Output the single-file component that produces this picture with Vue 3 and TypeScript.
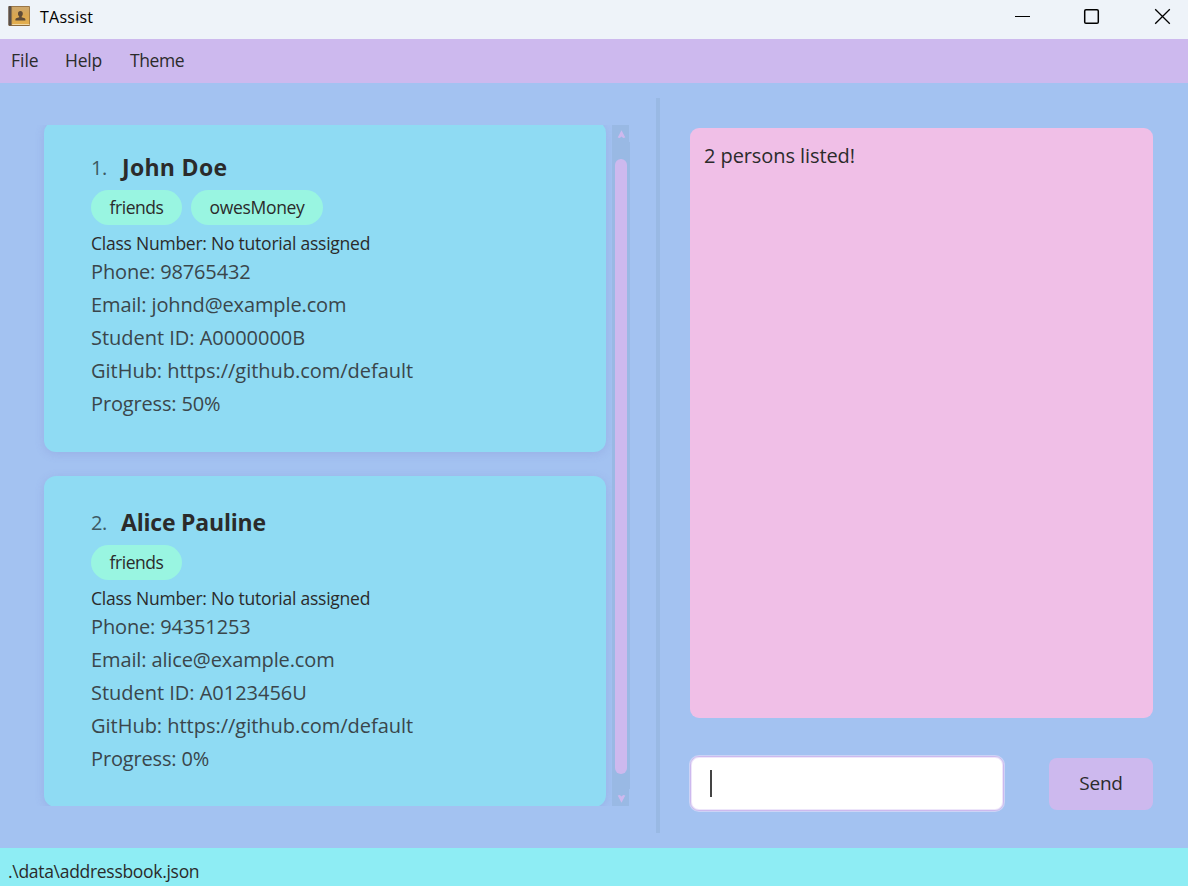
<script setup lang="ts">
interface Detail {
  text: string
  kind: string
}

interface Person {
  index: number
  name: string
  nameClass: string
  tags: { label: string; kind: string }[]
  details: Detail[]
}

const menus = [
  { label: 'File', kind: 'file' },
  { label: 'Help', kind: 'help' },
  { label: 'Theme', kind: 'theme' },
]

const persons: Person[] = [
  {
    index: 1,
    name: 'John Doe',
    nameClass: 'john',
    tags: [
      { label: 'friends', kind: 'short' },
      { label: 'owesMoney', kind: 'long' },
    ],
    details: [
      { text: 'Phone: 98765432', kind: 'phone' },
      { text: 'Email: johnd@example.com', kind: 'email' },
      { text: 'Student ID: A0000000B', kind: 'student' },
      { text: 'GitHub: https://github.com/default', kind: 'github' },
      { text: 'Progress: 50%', kind: 'progress' },
    ],
  },
  {
    index: 2,
    name: 'Alice Pauline',
    nameClass: 'alice',
    tags: [{ label: 'friends', kind: 'short' }],
    details: [
      { text: 'Phone: 94351253', kind: 'phone' },
      { text: 'Email: alice@example.com', kind: 'email' },
      { text: 'Student ID: A0123456U', kind: 'student' },
      { text: 'GitHub: https://github.com/default', kind: 'github' },
      { text: 'Progress: 0%', kind: 'progress' },
    ],
  },
]
</script>

<template>
  <div class="window">
    <header class="titlebar">
      <svg class="app-icon" width="24" height="24" viewBox="0 0 24 24">
        <defs>
          <linearGradient id="cover" x1="0" y1="0" x2="0" y2="1">
            <stop offset="0" stop-color="#cda76c" />
            <stop offset="0.5" stop-color="#d9a650" />
            <stop offset="1" stop-color="#e3ae4d" />
          </linearGradient>
        </defs>
        <rect x="0.5" y="2" width="21.5" height="20" rx="1" fill="#8d6a3c" />
        <rect x="4" y="2.8" width="17.3" height="17.2" fill="url(#cover)" />
        <rect x="4" y="20" width="17.5" height="1" fill="#f0d9a6" />
        <rect x="0.5" y="2" width="3" height="19.5" rx="0.8" fill="#594f4a" />
        <rect x="3.3" y="2.5" width="0.8" height="18.5" fill="#9b7c4d" />
        <ellipse cx="12.4" cy="9.7" rx="2.4" ry="2.8" fill="#5d4a37" />
        <path d="M11.2 11h2.4v2.3l3.1 1q.7.3.7 1.1v1.2H7.4v-1.2q0-.8.7-1.1l3.1-1z" fill="#5d4a37" />
      </svg>
      <span class="app-title">TAssist</span>
      <svg class="controls" width="160" height="24" viewBox="0 0 160 24" fill="none" stroke="#000">
        <path d="M7 12.5H22" />
        <rect x="76.7" y="5.7" width="13.6" height="13.6" rx="1.3" stroke-width="1.5" />
        <path d="M147.2 5.2l14.6 14.6M161.8 5.2l-14.6 14.6" stroke-width="1.3" />
      </svg>
    </header>

    <nav class="menubar">
      <span v-for="menu in menus" :key="menu.label" :class="['menu', menu.kind]">{{ menu.label }}</span>
    </nav>

    <main class="content">
      <section class="list-pane">
        <div class="list">
          <article v-for="person in persons" :key="person.index" class="card">
            <div class="heading">
              <span class="index">{{ person.index }}.</span>
              <span :class="['name', person.nameClass]">{{ person.name }}</span>
            </div>
            <div class="tags">
              <span v-for="tag in person.tags" :key="tag.label" :class="['tag', tag.kind]">{{ tag.label }}</span>
            </div>
            <div class="class-number"><span>Class Number: No tutorial assigned</span></div>
            <div v-for="detail in person.details" :key="detail.kind" :class="['detail', detail.kind]">
              <span>{{ detail.text }}</span>
            </div>
          </article>
        </div>
        <div class="scrollbar">
          <svg class="arrow" width="9" height="9" viewBox="0 0 9 9">
            <path d="M4.5 0.2L8.3 7.4 6.2 8 4.5 6.6 2.8 8 0.7 7.4z" fill="#cdb9ee" />
          </svg>
          <div class="thumb"></div>
          <svg class="arrow" width="9" height="9" viewBox="0 0 9 9">
            <path d="M4.5 8.8L8.3 1.6 6.2 1 4.5 2.4 2.8 1 0.7 1.6z" fill="#cdb9ee" />
          </svg>
        </div>
      </section>

      <div class="divider"></div>

      <section class="chat-pane">
        <div class="result"><span>2 persons listed!</span></div>
        <div class="command-row">
          <div class="command-box"><span class="caret"></span></div>
          <div class="send"><span>Send</span></div>
        </div>
      </section>
    </main>

    <footer class="statusbar"><span>.\data\addressbook.json</span></footer>
  </div>
</template>

<style>
html,
body {
  margin: 0;
  overflow: hidden;
}
</style>

<style scoped>
.window {
  display: flex;
  flex-direction: column;
  width: 1188px;
  height: 886px;
  overflow: hidden;
  background: #a3c2f1;
  color: #2b2b2b;
  font-family: 'Open Sans', 'Noto Sans', sans-serif;
  white-space: nowrap;
}

.window * {
  box-sizing: border-box;
}

.titlebar {
  display: flex;
  align-items: flex-start;
  height: 39px;
  padding: 4px 20px 0 8px;
  background: #eef3f9;
  color: #000;
}

.app-title {
  margin-left: 8px;
  font-size: 16px;
  line-height: 26px;
  letter-spacing: 0.25px;
}

.controls {
  margin-left: auto;
  overflow: visible;
}

.menubar {
  display: flex;
  height: 44px;
  padding-left: 11px;
  background: #cdb9ee;
  font-size: 17.5px;
  line-height: 43px;
}

.menu.file {
  width: 54px;
}

.menu.help {
  width: 65px;
  letter-spacing: -0.25px;
}

.menu.theme {
  letter-spacing: -0.4px;
}

.content {
  display: flex;
  height: 765px;
}

.list-pane {
  display: flex;
  width: 656px;
  padding: 42px 27px 42px 34px;
}

.list {
  flex: none;
  width: 578px;
  height: 681px;
  padding: 0 6px 0 10px;
  overflow: hidden;
}

.card {
  height: 331px;
  margin-bottom: 24px;
  padding: 28px 47px 0;
  border-radius: 12px;
  background: #8fdbf3;
  box-shadow: 0 2px 10px rgba(110, 110, 190, 0.2);
}

.card:first-child {
  margin-top: -4px;
}

.heading {
  display: flex;
  height: 36px;
  line-height: 36px;
}

.index {
  width: 30px;
  font-size: 20px;
  line-height: 38px;
  letter-spacing: -0.5px;
  color: #3d5a63;
}

.name {
  font-size: 23px;
  font-weight: 700;
}

.name.john {
  margin-left: 1px;
  letter-spacing: 0.3px;
}

.name.alice {
  letter-spacing: -0.2px;
}

.tags {
  display: flex;
  gap: 9px;
  margin-top: 5px;
}

.tag {
  height: 35px;
  border-radius: 18px;
  background: #99f5e1;
  font-size: 17.5px;
  line-height: 35px;
  letter-spacing: -0.3px;
  text-align: center;
}

.tag.short {
  width: 91px;
  letter-spacing: -0.45px;
}

.tag.long {
  width: 132px;
}

.class-number {
  height: 24px;
  margin-top: 6px;
  font-size: 17.5px;
  line-height: 24px;
  letter-spacing: -0.235px;
}

.detail {
  height: 33px;
  font-size: 20px;
  line-height: 33px;
  color: #3a464b;
}

.detail.phone,
.detail.progress {
  letter-spacing: -0.15px;
}

.detail.email {
  letter-spacing: -0.12px;
}

.detail.student,
.detail.github {
  letter-spacing: -0.02px;
}

.scrollbar {
  display: flex;
  flex: none;
  flex-direction: column;
  align-items: center;
  width: 18px;
  height: 681px;
  padding: 5px 0 3px;
  background:
    linear-gradient(#99b9e4, #99b9e4) 0 0 / 17px 100% no-repeat,
    linear-gradient(#99b9e4, #99b9e4) 0 17px / 18px 647px no-repeat;
}

.arrow {
  flex: none;
}

.thumb {
  width: 12px;
  height: 615px;
  margin: 20px 0;
  border-radius: 6px;
  background: #cdb9ee;
}

.divider {
  width: 4px;
  height: 735px;
  margin-top: 15px;
  background: #99b9e4;
}

.chat-pane {
  width: 493px;
  margin-left: 30px;
  padding-top: 45px;
}

.result {
  width: 463px;
  height: 590px;
  padding: 11px 14px;
  border-radius: 9px;
  background: #f0bfe7;
  font-size: 20px;
  line-height: 34px;
  letter-spacing: -0.08px;
}

.command-row {
  display: flex;
  align-items: center;
  justify-content: space-between;
  width: 463px;
  margin-top: 38px;
}

.command-box {
  display: flex;
  align-items: center;
  width: 314px;
  height: 55px;
  padding-left: 19px;
  border: 1px solid #cdb9ee;
  border-radius: 9px;
  background: #fff;
  box-shadow: 0 0 0 1px #ccd3f6, inset 0 0 0 1px #eee6fa;
}

.caret {
  width: 2px;
  height: 27px;
  background: #444;
}

.send {
  width: 104px;
  height: 52px;
  border-radius: 8px;
  background: #cdb9ee;
  font-size: 19px;
  line-height: 50px;
  letter-spacing: -0.2px;
  text-align: center;
}

.statusbar {
  height: 38px;
  padding-left: 8px;
  background: #8eedf4;
  font-size: 17.5px;
  line-height: 47px;
  letter-spacing: -0.3px;
}
</style>
